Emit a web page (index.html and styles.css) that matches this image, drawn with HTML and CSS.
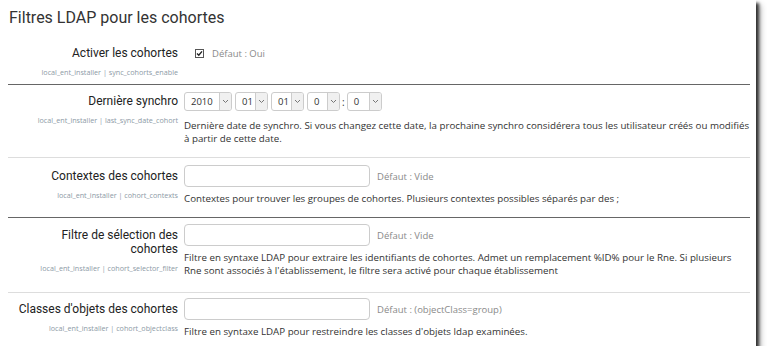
FILE: index.html
```html
<!DOCTYPE html>
<html lang="fr">
<head>
    <meta charset="UTF-8">
    <title>Filtres LDAP pour les cohortes</title>
    <link rel="stylesheet" href="styles.css">
</head>
<body>
    <div class="frame">
        <h2 class="page-title">Filtres LDAP pour les cohortes</h2>

        <div class="setting row-check sep-dark">
            <div class="label-col">
                <div class="label">Activer les cohortes</div>
                <div class="sublabel">local_ent_installer | sync_cohorts_enable</div>
            </div>
            <div class="content-col">
                <div class="control">
                    <span class="checkbox">
                        <svg width="9" height="9" viewBox="0 0 9 9"><rect x="0.5" y="0.5" width="8" height="8" fill="#fff" stroke="#555"/><path d="M2 4.6 L3.8 6.3 L7 2.4" fill="none" stroke="#222" stroke-width="1.4"/></svg>
                    </span>
                    <span class="default">Défaut : Oui</span>
                </div>
            </div>
        </div>

        <div class="setting row-date sep-light">
            <div class="label-col">
                <div class="label">Dernière synchro</div>
                <div class="sublabel">local_ent_installer | last_sync_date_cohort</div>
            </div>
            <div class="content-col">
                <div class="control date-control">
                    <div class="select w-year"><span class="val">2010</span><span class="caret"><svg width="7" height="5" viewBox="0 0 7 5"><path d="M1 1 L3.5 3.5 L6 1" fill="none" stroke="#777" stroke-width="1"/></svg></span></div>
                    <div class="select"><span class="val">01</span><span class="caret"><svg width="7" height="5" viewBox="0 0 7 5"><path d="M1 1 L3.5 3.5 L6 1" fill="none" stroke="#777" stroke-width="1"/></svg></span></div>
                    <div class="select"><span class="val">01</span><span class="caret"><svg width="7" height="5" viewBox="0 0 7 5"><path d="M1 1 L3.5 3.5 L6 1" fill="none" stroke="#777" stroke-width="1"/></svg></span></div>
                    <div class="select"><span class="val">0</span><span class="caret"><svg width="7" height="5" viewBox="0 0 7 5"><path d="M1 1 L3.5 3.5 L6 1" fill="none" stroke="#777" stroke-width="1"/></svg></span></div>
                    <span class="colon">:</span>
                    <div class="select w-min"><span class="val">0</span><span class="caret"><svg width="7" height="5" viewBox="0 0 7 5"><path d="M1 1 L3.5 3.5 L6 1" fill="none" stroke="#777" stroke-width="1"/></svg></span></div>
                </div>
                <div class="desc">Dernière date de synchro. Si vous changez cette date, la prochaine synchro considérera tous les utilisateur créés ou modifiés à partir de cette date.</div>
            </div>
        </div>

        <div class="setting row-contexts sep-dark">
            <div class="label-col">
                <div class="label">Contextes des cohortes</div>
                <div class="sublabel">local_ent_installer | cohort_contexts</div>
            </div>
            <div class="content-col">
                <div class="control">
                    <input type="text" class="text-input">
                    <span class="default">Défaut : Vide</span>
                </div>
                <div class="desc">Contextes pour trouver les groupes de cohortes. Plusieurs contextes possibles séparés par des ;</div>
            </div>
        </div>

        <div class="setting row-filter sep-light">
            <div class="label-col">
                <div class="label">Filtre de sélection des cohortes</div>
                <div class="sublabel">local_ent_installer | cohort_selector_filter</div>
            </div>
            <div class="content-col">
                <div class="control">
                    <input type="text" class="text-input">
                    <span class="default">Défaut : Vide</span>
                </div>
                <div class="desc">Filtre en syntaxe LDAP pour extraire les identifiants de cohortes. Admet un remplacement %ID% pour le Rne. Si plusieurs Rne sont associés à l'établissement, le filtre sera activé pour chaque établissement</div>
            </div>
        </div>

        <div class="setting row-last">
            <div class="label-col">
                <div class="label">Classes d'objets des cohortes</div>
                <div class="sublabel">local_ent_installer | cohort_objectclass</div>
            </div>
            <div class="content-col">
                <div class="control">
                    <input type="text" class="text-input">
                    <span class="default">Défaut : (objectClass=group)</span>
                </div>
                <div class="desc">Filtre en syntaxe LDAP pour restreindre les classes d'objets ldap examinées.</div>
            </div>
        </div>
    </div>
</body>
</html>
```

FILE: styles.css
```css
html, body {
    margin: 0;
    padding: 0;
    background: #fff;
}
.frame {
    width: 747px;
    height: 346px;
    padding: 0 1px 0 8px;
    background: #fff;
    box-shadow: 3px 3px 3px rgba(0, 0, 0, 0.75), 5px 5px 6px rgba(0, 0, 0, 0.25);
    overflow: hidden;
    font-family: Roboto, "Liberation Sans", sans-serif;
    color: #333;
}
.page-title {
    margin: 0;
    padding: 7px 0 0 1px;
    height: 27px;
    font-size: 16px;
    font-weight: 400;
    line-height: 22px;
    color: #333;
}
.setting {
    display: grid;
    grid-template-columns: 170px 1fr;
    column-gap: 6px;
    padding: 7px 0 12px;
    width: 742px;
}
.sep-dark {
    border-bottom: 1px solid #666;
}
.sep-light {
    border-bottom: 1px solid #ddd;
}
.row-check {
    padding-top: 8px;
    padding-bottom: 7px;
}
.row-filter {
    padding-top: 6px;
    padding-bottom: 15px;
}
.row-last {
    padding-top: 5px;
    padding-bottom: 4px;
}
.label-col {
    text-align: right;
    padding-left: 6px;
}
.label {
    font-size: 12px;
    line-height: 14px;
    padding-top: 4px;
    color: #222;
}
.row-date .label {
    padding-top: 2px;
}
.sublabel {
    margin-top: 7px;
    font-family: "Open Sans", sans-serif;
    font-size: 7.2px;
    line-height: 10px;
    color: #8d9aa6;
    white-space: nowrap;
}
.control {
    display: flex;
    align-items: center;
    height: 22px;
}
.date-control {
    height: 19px;
    gap: 3px;
}
.checkbox {
    display: inline-flex;
    margin-left: 11px;
    margin-right: 8px;
}
.default {
    font-family: "Open Sans", sans-serif;
    font-size: 9.5px;
    color: #8a8a8a;
    margin-left: 7px;
}
.checkbox + .default {
    margin-left: 0;
}
.text-input {
    box-sizing: border-box;
    width: 186px;
    height: 22px;
    margin: 0;
    border: 1px solid #ccc;
    border-radius: 4px;
    background: #fff;
}
.select {
    box-sizing: border-box;
    display: flex;
    width: 33px;
    height: 19px;
    border: 1px solid #ccc;
    border-radius: 3px;
    font-family: "Open Sans", sans-serif;
    font-size: 9.5px;
    color: #333;
    overflow: hidden;
}
.select.w-year {
    width: 48px;
}
.select.w-min {
    width: 35px;
}
.select .val {
    flex: 1;
    padding-left: 6px;
    line-height: 17px;
}
.select .caret {
    width: 11px;
    display: flex;
    align-items: center;
    justify-content: center;
    background: #f0f0f0;
    border-left: 1px solid #ccc;
}
.colon {
    font-family: "Open Sans", sans-serif;
    font-size: 10px;
    margin: 0 -1px;
}
.desc {
    margin-top: 5px;
    font-family: "Open Sans", sans-serif;
    font-size: 9.75px;
    line-height: 13px;
    color: #333;
}
.row-date .desc {
    margin-top: 8px;
}
```
